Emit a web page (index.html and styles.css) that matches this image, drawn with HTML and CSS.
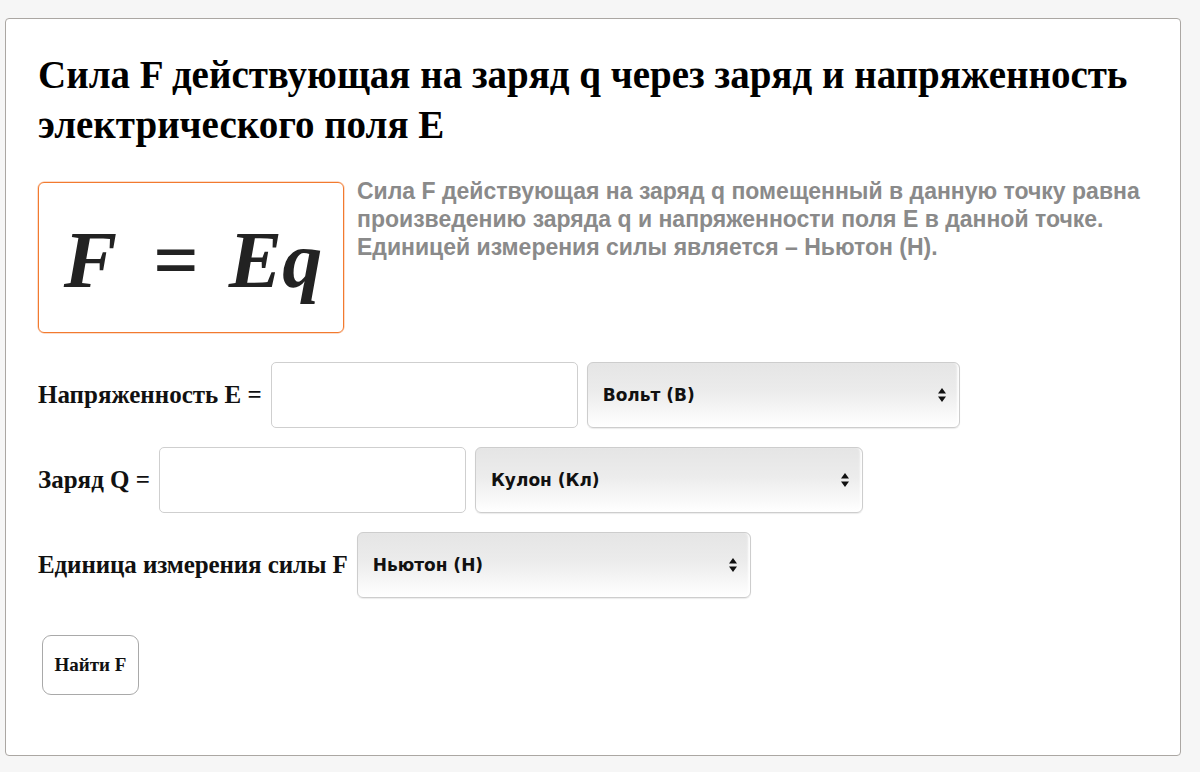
FILE: index.html
```html
<!DOCTYPE html>
<html lang="ru">
<head>
<meta charset="utf-8">
<title>Сила F</title>
<link rel="stylesheet" href="styles.css">
</head>
<body>
<div class="card">
  <h1 class="title">Сила F действующая на заряд q через заряд и напряженность электрического поля E</h1>
  <div class="intro">
    <div class="formula"><span class="fv">F</span><span class="eq">=</span><span class="fv">Eq</span></div>
    <p class="desc">Сила F действующая на заряд q помещенный в данную точку равна произведению заряда q и напряженности поля E в данной точке. Единицей измерения силы является – Ньютон (Н).</p>
  </div>
  <div class="row row-first">
    <label class="lbl">Напряженность E =</label>
    <input class="inp" type="text">
    <div class="sel sel-1"><select><option>Вольт (В)</option></select><svg class="arr" viewBox="0 0 8 14" width="8" height="14"><path d="M4 0 L8 5.5 L0 5.5Z M0 8.5 L8 8.5 L4 14Z" fill="#111"/></svg></div>
  </div>
  <div class="row">
    <label class="lbl">Заряд Q =</label>
    <input class="inp" type="text">
    <div class="sel sel-2"><select><option>Кулон (Кл)</option></select><svg class="arr" viewBox="0 0 8 14" width="8" height="14"><path d="M4 0 L8 5.5 L0 5.5Z M0 8.5 L8 8.5 L4 14Z" fill="#111"/></svg></div>
  </div>
  <div class="row">
    <label class="lbl lbl-wide">Единица измерения силы F</label>
    <div class="sel sel-3"><select><option>Ньютон (Н)</option></select><svg class="arr" viewBox="0 0 8 14" width="8" height="14"><path d="M4 0 L8 5.5 L0 5.5Z M0 8.5 L8 8.5 L4 14Z" fill="#111"/></svg></div>
  </div>
  <button class="btn" type="button">Найти F</button>
</div>
</body>
</html>
```
FILE: styles.css
```css
html, body {
  margin: 0;
  padding: 0;
}
body {
  background: #f6f6f6;
  font-family: "Liberation Serif", "Times New Roman", serif;
  width: 1200px;
  height: 772px;
  overflow: hidden;
}
.card {
  margin: 18px 19px 0 5px;
  height: 738px;
  box-sizing: border-box;
  background: #fff;
  border: 1px solid #aba7a3;
  border-radius: 4px;
  padding: 31px 32px 0 32px;
}
.title {
  margin: 0;
  font-size: 39px;
  line-height: 50px;
  font-weight: bold;
  color: #000;
}
.intro {
  display: flex;
  align-items: flex-start;
  margin-top: 32px;
}
.formula {
  width: 306px;
  height: 151px;
  box-sizing: border-box;
  border: 1px solid #f27a2f;
  border-radius: 6px;
  box-shadow: 0 0 0 0.5px rgba(242, 122, 47, 0.5);
  display: flex;
  align-items: center;
  justify-content: center;
  font-family: "Liberation Serif", "Times New Roman", serif;
  font-weight: bold;
  color: #222;
  flex-shrink: 0;
  padding: 4px 0 0 4px;
}
.fv {
  font-style: italic;
  font-size: 80px;
  line-height: 1;
}
.eq {
  font-size: 80px;
  line-height: 1;
  margin: 0 30px 0 36px;
}
.desc {
  margin: -5px 0 0 13px;
  font-family: "Liberation Sans", Arial, sans-serif;
  font-weight: bold;
  font-size: 23px;
  line-height: 28px;
  color: #8a8a8a;
}
.row {
  display: flex;
  align-items: center;
  gap: 9px;
  margin-top: 19px;
}
.row-first {
  margin-top: 29px;
}
.lbl {
  font-weight: bold;
  font-size: 25px;
  color: #111;
}
.lbl-wide {
  letter-spacing: -0.1px;
}
.inp {
  width: 307px;
  height: 66px;
  box-sizing: border-box;
  border: 1px solid #cfcfcf;
  border-radius: 5px;
  background: #fff;
  margin: 0;
}
.sel {
  position: relative;
  height: 66px;
}
.sel-1 { width: 373px; }
.sel-2 { width: 388px; }
.sel-3 { width: 394px; }
.sel select {
  appearance: none;
  -webkit-appearance: none;
  width: 100%;
  height: 100%;
  box-sizing: border-box;
  border: 1px solid #cdcdcd;
  border-radius: 6px;
  background: linear-gradient(#e5e5e5 0%, #ececec 45%, #ffffff 100%);
  box-shadow: inset -2px -1px 2px rgba(255,255,255,0.9), 0 1px 1px rgba(0,0,0,0.08);
  font-family: "DejaVu Sans", Verdana, sans-serif;
  font-weight: bold;
  font-size: 17px;
  color: #111;
  padding: 0 0 0 15px;
  margin: 0;
}
.arr {
  position: absolute;
  right: 14px;
  top: 26px;
}
.btn {
  margin: 37px 0 0 4px;
  width: 97px;
  height: 60px;
  border: 1px solid #a9a9a9;
  border-radius: 9px;
  background: #fff;
  font-family: "Liberation Serif", "Times New Roman", serif;
  font-weight: bold;
  font-size: 19px;
  color: #111;
  padding: 0;
}
```
